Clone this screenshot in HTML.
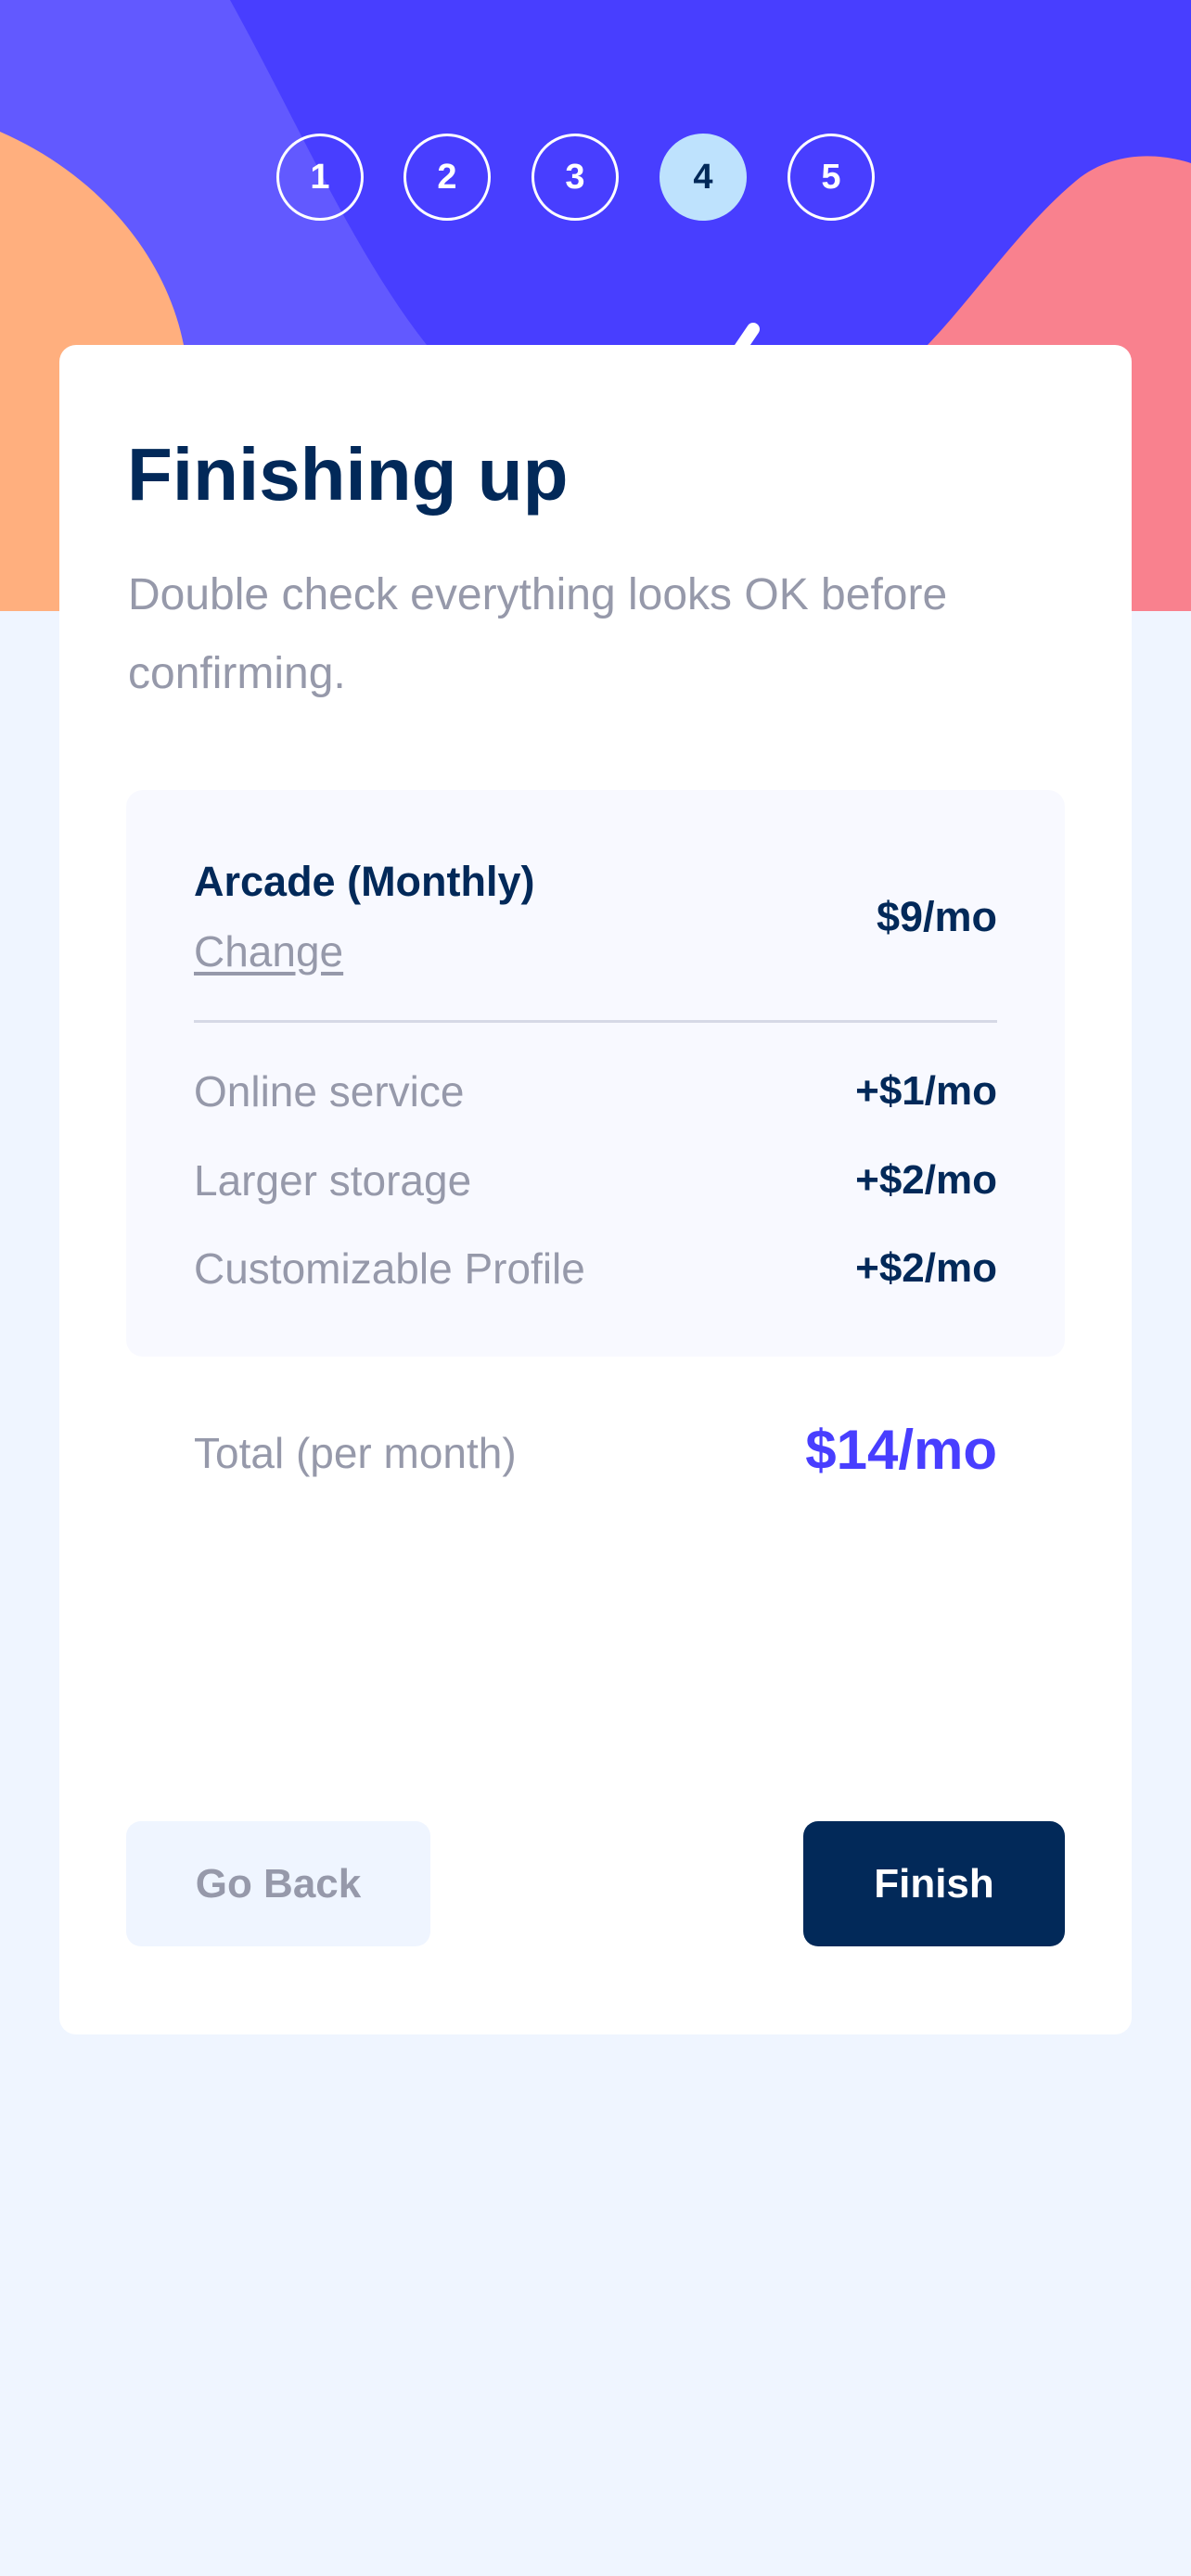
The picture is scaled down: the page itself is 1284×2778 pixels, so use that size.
<!DOCTYPE html>
<html><head><meta charset="utf-8"><style>
*{margin:0;padding:0;box-sizing:border-box}
body{width:1284px;height:2778px;background:#EFF5FF;position:relative;overflow:hidden;font-family:"Liberation Sans",sans-serif}
.t{position:absolute;white-space:nowrap;line-height:1}
.c{position:absolute;width:94px;height:94px;border-radius:50%;border:3px solid #fff;color:#fff;font-size:38px;font-weight:bold;display:flex;align-items:center;justify-content:center;top:144px}
</style></head><body>
<svg style="position:absolute;left:0;top:0" width="1284" height="659" viewBox="0 0 1284 659">
<rect width="1284" height="659" fill="#483EFF"/>
<path d="M0 0 L248 0 C320 130 380 270 460 372 L470 659 L0 659 Z" fill="#6259FF"/>
<path d="M0 142 C110 190 180 280 198 372 C215 450 215 560 220 659 L0 659 Z" fill="#FFAF7E"/>
<path d="M1284 176 C1250 165 1200 162 1160 195 C1100 245 1050 320 1000 372 C980 400 970 500 965 659 L1284 659 Z" fill="#F9818E"/>
<path d="M795 380 L812 355" stroke="#fff" stroke-width="14" stroke-linecap="round"/>
</svg>
<div class="c" style="left:298px">1</div>
<div class="c" style="left:435px">2</div>
<div class="c" style="left:573px">3</div>
<div class="c" style="left:711px;background:#BEE2FD;border-color:#BEE2FD;color:#022959">4</div>
<div class="c" style="left:849px">5</div>

<div style="position:absolute;left:64px;top:372px;width:1156px;height:1822px;background:#fff;border-radius:18px"></div>
<div class="t" style="left:137px;top:472px;font-size:80px;font-weight:bold;color:#022959">Finishing up</div>
<div class="t" style="left:138px;top:599px;font-size:48px;color:#9699AA;line-height:85px;white-space:normal;width:1050px">Double check everything looks OK before<br>confirming.</div>

<div style="position:absolute;left:136px;top:852px;width:1012px;height:611px;background:#F8F9FF;border-radius:18px"></div>
<div class="t" style="left:209px;top:928px;font-size:45px;font-weight:bold;color:#022959">Arcade (Monthly)</div>
<div class="t" style="left:209px;top:1003px;font-size:46px;color:#9699AA;text-decoration:underline;text-underline-offset:6px">Change</div>
<div class="t" style="right:209px;top:966px;font-size:45px;font-weight:bold;color:#022959">$9/mo</div>
<div style="position:absolute;left:209px;top:1100px;width:866px;height:3px;background:#D6D9E6"></div>
<div class="t" style="left:209px;top:1154px;font-size:46px;color:#9699AA">Online service</div>
<div class="t" style="right:209px;top:1155px;font-size:44px;font-weight:bold;color:#022959">+$1/mo</div>
<div class="t" style="left:209px;top:1250px;font-size:46px;color:#9699AA">Larger storage</div>
<div class="t" style="right:209px;top:1251px;font-size:44px;font-weight:bold;color:#022959">+$2/mo</div>
<div class="t" style="left:209px;top:1345px;font-size:46px;color:#9699AA">Customizable Profile</div>
<div class="t" style="right:209px;top:1346px;font-size:44px;font-weight:bold;color:#022959">+$2/mo</div>
<div class="t" style="left:209px;top:1544px;font-size:46px;color:#9699AA">Total (per month)</div>
<div class="t" style="right:209px;top:1534px;font-size:60px;font-weight:bold;color:#483EFF">$14/mo</div>

<div style="position:absolute;left:136px;top:1964px;width:328px;height:135px;background:#EFF5FF;border-radius:16px;color:#9699AA;font-size:44px;font-weight:bold;display:flex;align-items:center;justify-content:center">Go Back</div>
<div style="position:absolute;left:866px;top:1964px;width:282px;height:135px;background:#022959;border-radius:16px;color:#fff;font-size:44px;font-weight:bold;display:flex;align-items:center;justify-content:center">Finish</div>
</body></html>
